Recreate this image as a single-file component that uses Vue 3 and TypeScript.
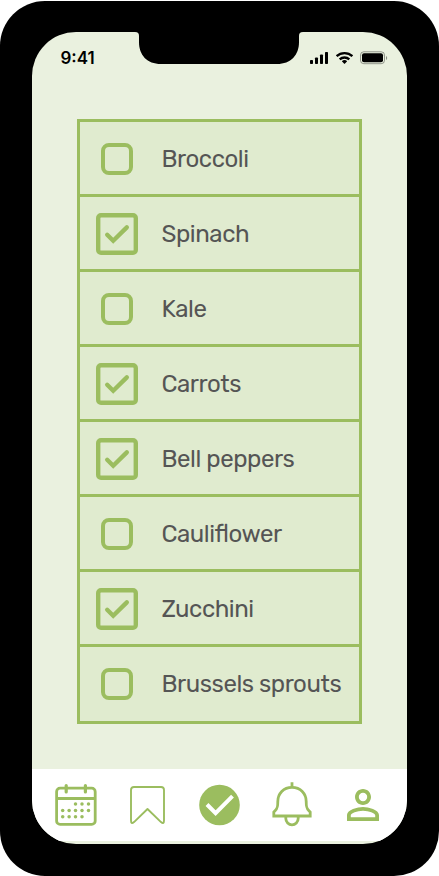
<script setup lang="ts">
interface Item {
  name: string
  done: boolean
}

const items: Item[] = [
  { name: 'Broccoli', done: false },
  { name: 'Spinach', done: true },
  { name: 'Kale', done: false },
  { name: 'Carrots', done: true },
  { name: 'Bell peppers', done: true },
  { name: 'Cauliflower', done: false },
  { name: 'Zucchini', done: true },
  { name: 'Brussels sprouts', done: false },
]

const dots: [number, number][] = [
  [20.5, 21], [27, 21], [33.5, 21],
  [7.7, 27.4], [14.1, 27.4], [20.5, 27.4], [27, 27.4], [33.5, 27.4],
  [7.7, 33.8], [14.1, 33.8], [20.5, 33.8], [27, 33.8],
]
</script>

<template>
  <div class="phone">
    <div class="screen">
      <svg class="notch" width="168" height="32" viewBox="0 0 168 32" aria-hidden="true">
        <path d="M0 0C3 0 4 1.3 4 4V10C4 23 12 32 26 32H142C156 32 164 23 164 10V4C164 1.3 165 0 168 0Z" />
      </svg>
      <header class="status">
        <span class="time">9:41</span>
        <svg class="signals" width="78" height="14" viewBox="0 0 78 14" aria-hidden="true">
          <rect x="0" y="9" width="3" height="4" rx=".8" />
          <rect x="5" y="6.5" width="3" height="6.5" rx=".8" />
          <rect x="10" y="3.5" width="3" height="9.5" rx=".8" />
          <rect x="15" y="1" width="3" height="12" rx=".8" />
          <g fill="none" stroke="#000" stroke-width="2.4">
            <path d="M26.6 5.2A11.7 11.7 0 0 1 42.4 5.2" />
            <path d="M29.7 8.4A7 7 0 0 1 39.3 8.4" />
          </g>
          <path d="M34.5 13L31.8 10.3A3.9 3.9 0 0 1 37.2 10.3Z" />
          <rect x="50.5" y=".8" width="24" height="11.9" rx="3.3" fill="none" stroke="#000" stroke-opacity=".38" />
          <rect x="52" y="2.3" width="21" height="9" rx="2" />
          <path d="M76 5V9C77.6 8.4 77.6 5.6 76 5Z" fill-opacity=".4" />
        </svg>
      </header>

      <ul class="list">
        <li v-for="item in items" :key="item.name" class="row">
          <span class="mark">
            <svg v-if="item.done" width="42" height="42" viewBox="0 0 42 42">
              <rect x="2.2" y="2.2" width="37.6" height="37.6" rx="2.8" fill="none" stroke="#9bbd5f" stroke-width="4.4" />
              <path d="M11.2 21.8L17.2 27.7L30.8 14.4" fill="none" stroke="#9bbd5f" stroke-width="4.4" stroke-linecap="round" />
            </svg>
            <span v-else class="box"></span>
          </span>
          <span class="name">{{ item.name }}</span>
        </li>
      </ul>

      <nav class="tabs">
        <svg width="42" height="44" viewBox="0 0 42 44">
          <g fill="none" stroke="#9bbd5f">
            <rect x="1.6" y="5.2" width="38.6" height="36.2" rx="3.5" stroke-width="2.8" />
            <path d="M1.6 15.5H40" stroke-width="2.8" />
            <path d="M11.2 2.6V9M30.4 2.6V9" stroke-width="3.2" stroke-linecap="round" />
          </g>
          <circle v-for="(d, i) in dots" :key="i" :cx="d[0]" :cy="d[1]" r="1.75" fill="#9bbd5f" />
        </svg>
        <svg width="35" height="44" viewBox="0 0 35 44">
          <path d="M4 4H31Q34 4 34 7V37.5Q34 41.6 31 39.1L17.5 26L4 39.1Q1 41.6 1 37.5V7Q1 4 4 4Z" fill="none" stroke="#9bbd5f" stroke-width="1.9" stroke-linejoin="round" />
        </svg>
        <svg width="41" height="44" viewBox="0 0 41 44">
          <circle cx="20.5" cy="22" r="20.3" fill="#9bbd5f" />
          <path d="M8 21.5L16.6 30.2L33.5 13.2" fill="none" stroke="#fff" stroke-width="4" />
        </svg>
        <svg class="bell" width="40" height="44" viewBox="0 0 40 44">
          <g fill="none" stroke="#9bbd5f" stroke-width="2.8">
            <path d="M20 -.8V5" />
            <path d="M20 4.4C11.5 4.4 5.8 10.5 5.8 18.5C5.8 24 5.5 25.3 3.5 27.2L1.8 29V33H38.2V29L36.5 27.2C34.5 25.3 34.2 24 34.2 18.5C34.2 10.5 28.5 4.4 20 4.4Z" />
            <path d="M13.8 33.5V35.6A6.2 6.2 0 0 0 26.2 35.6V33.5" />
          </g>
        </svg>
        <svg class="person" width="48" height="48" viewBox="0 0 24 24">
          <path fill="#9bbd5f" d="M12 5.9a2.1 2.1 0 1 1 0 4.2 2.1 2.1 0 0 1 0-4.2m0 9c2.97 0 6.1 1.46 6.1 2.1v1.1H5.9V17c0-.64 3.13-2.1 6.1-2.1M12 4C9.79 4 8 5.79 8 8s1.79 4 4 4 4-1.79 4-4-1.79-4-4-4zm0 9c-2.67 0-8 1.34-8 4v3h16v-3c0-2.66-5.33-4-8-4z" />
        </svg>
      </nav>
    </div>
  </div>
</template>

<style>
body {
  margin: 0;
  background: #fff;
}
</style>

<style scoped>
.phone {
  box-sizing: border-box;
  width: 439px;
  height: 875px;
  margin-top: 0.5px;
  padding: 31.5px 32px;
  border-radius: 45px;
  background: #000;
}
.screen {
  position: relative;
  display: flex;
  flex-direction: column;
  height: 812px;
  border-radius: 44px;
  background: #eaf1df;
  overflow: hidden;
}
.notch {
  position: absolute;
  top: 0;
  left: 103px;
}
.status {
  display: flex;
  justify-content: space-between;
  align-items: center;
  height: 20px;
  padding: 16px 19px 0 28.5px;
}
.time {
  font: 600 17px/20px Inter, sans-serif;
  color: #000;
}
.list {
  box-sizing: border-box;
  width: 285px;
  height: 605px;
  margin: 51px 0 0 45px;
  padding: 0;
  border: 3px solid #9bbd5f;
  background: #e0ebcf;
  list-style: none;
}
.row {
  display: flex;
  box-sizing: border-box;
  align-items: center;
  height: 75px;
  padding: 2px 0 0 16px;
  gap: 23.5px;
  border-bottom: 3px solid #9bbd5f;
}
.row:last-child {
  border-bottom: 0;
  height: 72px;
}
.mark {
  display: flex;
  justify-content: center;
  width: 42px;
}
.mark svg {
  display: block;
}
.box {
  box-sizing: border-box;
  width: 32px;
  height: 32px;
  border: 4px solid #9bbd5f;
  border-radius: 8px;
}
.name {
  font: 400 24px/30px Rubik, Roboto, sans-serif;
  font-feature-settings: 'liga' 1;
  letter-spacing: -0.44px;
  color: #555;
  white-space: nowrap;
}
.tabs {
  display: grid;
  grid-template-columns: repeat(5, 72px);
  box-sizing: border-box;
  place-items: center;
  height: 72px;
  margin-top: 45px;
  padding-left: 7.5px;
  background: #fff;
}
.bell {
  overflow: visible;
}
.person {
  margin-right: 1px;
}
</style>
